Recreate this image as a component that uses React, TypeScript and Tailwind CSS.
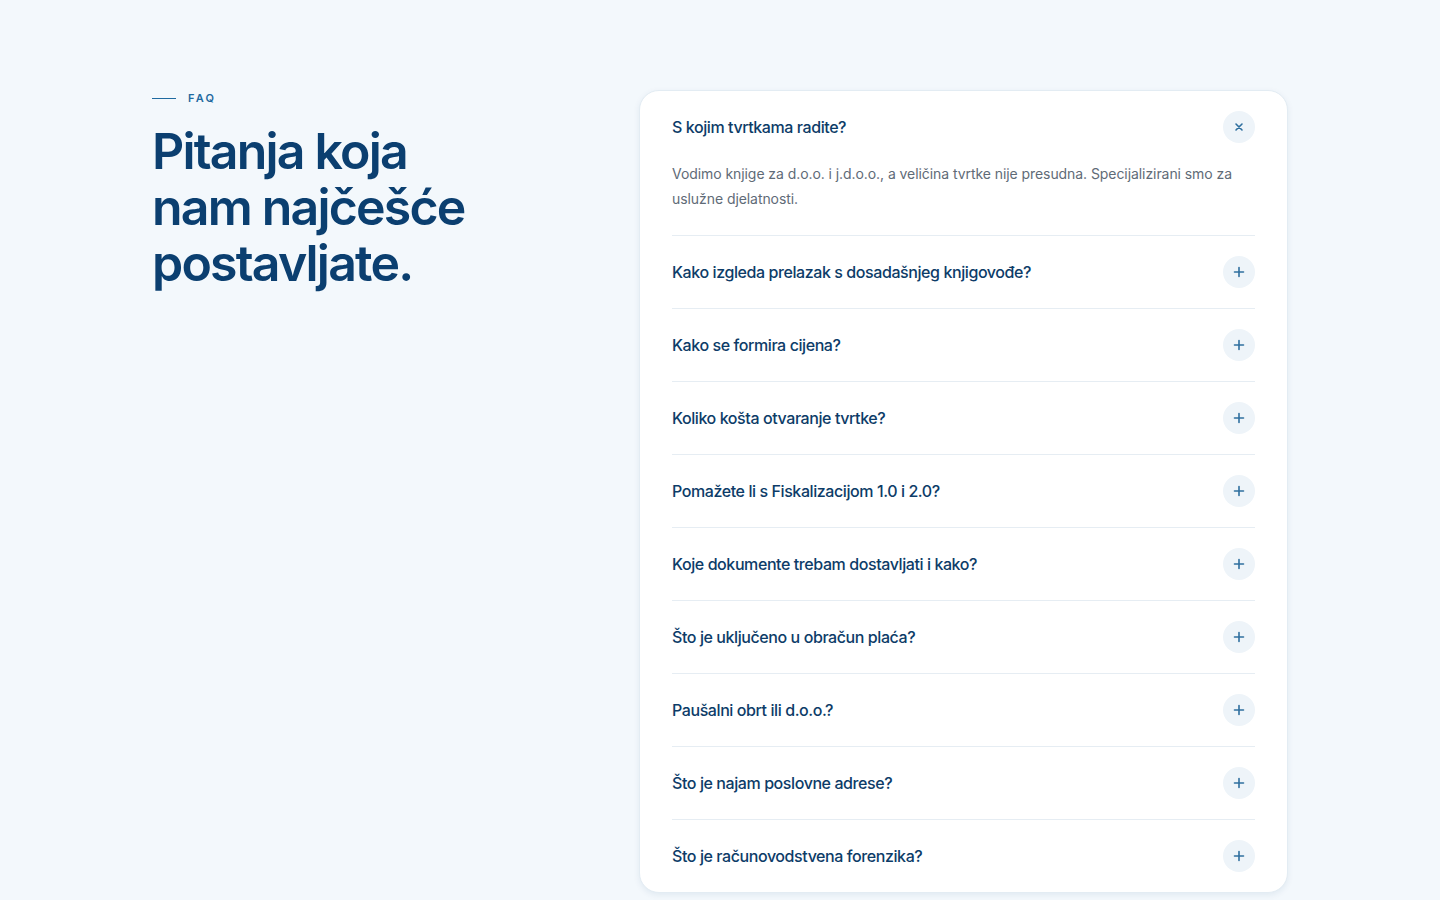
import React, { useState } from "react";

const items = [
  {
    q: "S kojim tvrtkama radite?",
    a: "Vodimo knjige za d.o.o. i j.d.o.o., a veličina tvrtke nije presudna. Specijalizirani smo za uslužne djelatnosti.",
  },
  { q: "Kako izgleda prelazak s dosadašnjeg knjigovođe?", a: "" },
  { q: "Kako se formira cijena?", a: "" },
  { q: "Koliko košta otvaranje tvrtke?", a: "" },
  { q: "Pomažete li s Fiskalizacijom 1.0 i 2.0?", a: "" },
  { q: "Koje dokumente trebam dostavljati i kako?", a: "" },
  { q: "Što je uključeno u obračun plaća?", a: "" },
  { q: "Paušalni obrt ili d.o.o.?", a: "" },
  { q: "Što je najam poslovne adrese?", a: "" },
  { q: "Što je računovodstvena forenzika?", a: "" },
];

function PlusIcon() {
  return (
    <svg width="12" height="12" viewBox="0 0 12 12" fill="none">
      <path d="M6 1.5v9M1.5 6h9" stroke="#2f6f9f" strokeWidth="1.6" strokeLinecap="round" />
    </svg>
  );
}

function CloseIcon() {
  return (
    <svg width="10" height="10" viewBox="0 0 10 10" fill="none">
      <path d="M2 2l6 6M8 2l-6 6" stroke="#2f6f9f" strokeWidth="1.6" strokeLinecap="round" />
    </svg>
  );
}

export default function App() {
  const [open, setOpen] = useState<number>(0);
  return (
    <div
      className="min-h-screen w-full bg-[#f3f8fc]"
      style={{ fontFamily: "Inter, 'Noto Sans', sans-serif" }}
    >
      <div className="mx-auto flex w-[1136px] justify-between pt-[90px]">
        <div className="w-[420px]">
          <div className="flex items-center gap-3">
            <div className="h-px w-6 bg-[#1f6aa0]" />
            <span className="text-[11px] font-semibold tracking-[0.2em] text-[#1f6aa0]">FAQ</span>
          </div>
          <h2 className="mt-[16px] text-[50px] font-semibold leading-[56px] tracking-[-0.036em] text-[#0b3f70]">
            Pitanja koja
            <br />
            nam najčešće
            <br />
            postavljate.
          </h2>
        </div>
        <div className="w-[649px] rounded-[20px] border border-[#e3ecf3] bg-white px-8 shadow-[0_2px_6px_rgba(15,60,110,0.08)]">
          {items.map((it, i) => {
            const isOpen = open === i;
            return (
              <div
                key={i}
                className={i < items.length - 1 ? "border-b border-[#e6edf3]" : ""}
              >
                <button
                  type="button"
                  onClick={() => setOpen(isOpen ? -1 : i)}
                  className="flex w-full items-center justify-between py-5 text-left"
                >
                  <span className="text-[16px] font-medium tracking-[-0.026em] text-[#0d3c68]">
                    {it.q}
                  </span>
                  <span className="flex h-8 w-8 items-center justify-center rounded-full bg-[#eef4f9]">
                    {isOpen ? <CloseIcon /> : <PlusIcon />}
                  </span>
                </button>
                {isOpen && it.a && (
                  <p className="-mt-[2px] pb-6 text-[14px] leading-[25px] tracking-[-0.005em] text-[#5f6b77]">
                    {it.a}
                  </p>
                )}
              </div>
            );
          })}
        </div>
      </div>
    </div>
  );
}
